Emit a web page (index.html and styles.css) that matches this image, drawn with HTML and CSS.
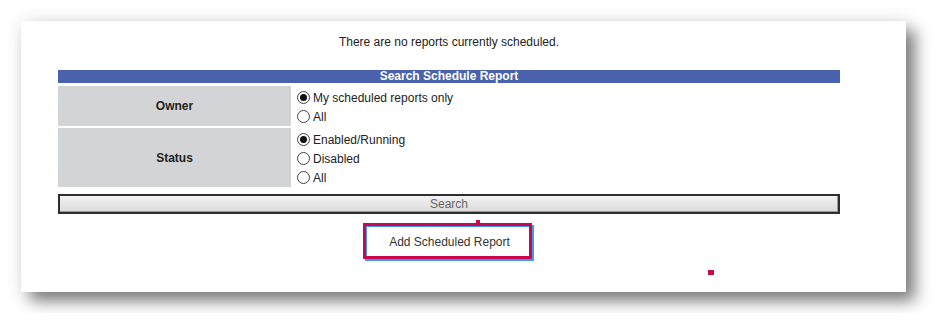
FILE: index.html
```html
<!DOCTYPE html>
<html lang="en">
<head>
    <meta charset="UTF-8">
    <title>Scheduled Reports</title>
    <link rel="stylesheet" href="styles.css">
</head>
<body>
    <div class="card">
        <div class="content">
            <p class="message">There are no reports currently scheduled.</p>

            <div class="search-form">
                <div class="form-title">Search Schedule Report</div>
                <div class="form-row">
                    <div class="form-label">Owner</div>
                    <div class="form-options">
                        <label><input type="radio" name="owner" checked> My scheduled reports only</label>
                        <label><input type="radio" name="owner"> All</label>
                    </div>
                </div>
                <div class="form-row">
                    <div class="form-label">Status</div>
                    <div class="form-options">
                        <label><input type="radio" name="status" checked> Enabled/Running</label>
                        <label><input type="radio" name="status"> Disabled</label>
                        <label><input type="radio" name="status"> All</label>
                    </div>
                </div>
                <button class="search-btn">Search</button>
            </div>

            <div class="add-wrapper">
                <button class="add-btn">Add Scheduled Report</button>
                <div class="highlight"></div> <!-- рамка выделения -->
                <div class="marker marker-top"></div>
            </div>
        </div>
        <div class="marker marker-stray"></div>
    </div>
</body>
</html>
```

FILE: styles.css
```css
body {
    font-family: 'Liberation Sans', Arial, sans-serif;
    margin: 0;
    padding: 21px;
    background-color: #fff;
}

.card {
    position: relative;
    width: 885px;
    height: 271px;
    background-color: #fff;
    box-shadow: 9px 9px 15px rgba(0, 0, 0, 0.5), 0 0 18px rgba(0, 0, 0, 0.08);
}

.content {
    width: 782px;
    margin-left: 37px;
    padding-top: 14px;
    display: flex;
    flex-direction: column;
    align-items: center;
}

.message {
    margin: 0;
    font-size: 12px;
    line-height: 14px;
    color: #222;
}

.search-form {
    width: 100%;
    margin-top: 21px;
    display: flex;
    flex-direction: column;
}

.form-title {
    background-color: #4a62ad;
    color: #fff;
    font-size: 12px;
    font-weight: bold;
    line-height: 13px;
    height: 13px;
    text-align: center;
    margin-bottom: 3px;
}

.form-row {
    display: flex;
    gap: 2px;
    margin-bottom: 2px;
}

.form-label {
    width: 233px;
    background-color: #d3d4d6;
    color: #222;
    font-size: 12px;
    font-weight: bold;
    display: flex;
    align-items: center;
    justify-content: center;
}

.form-options {
    flex: 1;
    display: flex;
    flex-direction: column;
    padding: 2px 0 0 4px;
}

.form-options label {
    display: flex;
    align-items: center;
    gap: 3px;
    height: 19px;
    font-size: 12px;
    color: #222;
}

.form-options input[type=radio] {
    appearance: none;
    -webkit-appearance: none;
    width: 13px;
    height: 13px;
    margin: 0;
    border: 1px solid #444;
    border-radius: 50%;
    background-color: #fff;
    position: relative;
}

.form-options input[type=radio]:checked::after {
    content: "";
    position: absolute;
    left: 2px;
    top: 2px;
    width: 7px;
    height: 7px;
    border-radius: 50%;
    background-color: #111;
}

.search-btn {
    margin-top: 5px;
    height: 20px;
    width: 100%;
    border: 2px solid #2e2e2e;
    background: linear-gradient(#f2f2f2, #dadada);
    box-shadow: inset -1px -1px 0 #999;
    color: #666;
    font-family: inherit;
    font-size: 12px;
    padding: 0;
}

.add-wrapper {
    position: relative;
    margin-top: 11px;
    margin-left: 1px;
}

.add-btn {
    width: 169px;
    height: 36px;
    border: 2px solid #3d9cf2;
    background-color: #fff;
    color: #333;
    font-family: inherit;
    font-size: 12px;
    padding: 0 0 3px 0;
    display: block;
}

.highlight {
    position: absolute;
    left: -2px;
    top: -2px;
    width: 163px;
    height: 30px;
    border: 3px solid #c8084f;
}

.marker {
    position: absolute;
    background-color: #c8084f;
    width: 4px;
    height: 4px;
}

.marker-top {
    left: 111px;
    top: -5px;
    height: 5px;
}

.marker-stray {
    left: 687px;
    top: 249px;
    width: 6px;
    height: 5px;
}
```
